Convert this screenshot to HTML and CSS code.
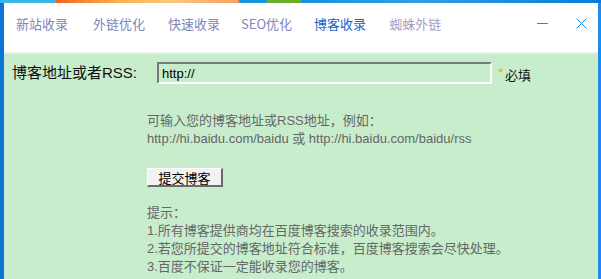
FILE: index.html
```html
<!DOCTYPE html>
<html lang="zh-CN">
<head>
<meta charset="utf-8">
<title>博客收录</title>
<link rel="stylesheet" href="styles.css">
</head>
<body>
<div class="wallpaper"></div>
<div class="frame">
  <div class="edge edge-left"></div>
  <div class="window">
    <div class="header">
      <nav class="tabs">
        <span class="tab t1">新站收录</span>
        <span class="tab t2">外链优化</span>
        <span class="tab t3">快速收录</span>
        <span class="tab t4">SEO优化</span>
        <span class="tab t5 active">博客收录</span>
        <span class="tab t6 hover">蜘蛛外链</span>
      </nav>
      <div class="controls">
        <span class="min"></span>
        <svg class="close" width="11" height="11" viewBox="0 0 11 11"><path d="M0.5 0.5 L10.5 10.5 M10.5 0.5 L0.5 10.5" stroke="#1e88e5" stroke-width="1" fill="none"/></svg>
      </div>
    </div>
    <div class="content">
      <div class="form-row">
        <div class="label-cell"><label class="label">博客地址或者RSS:</label></div>
        <input class="url" type="text" value="http://">
        <span class="star">*</span>
        <span class="req">必填</span>
      </div>
      <div class="body">
        <p class="hint">可输入您的博客地址或RSS地址，例如：<br>http://hi.baidu.com/baidu 或 http://hi.baidu.com/baidu/rss</p>
        <button class="submit" type="button">提交博客</button>
        <p class="tips">提示：<br>1.所有博客提供商均在百度博客搜索的收录范围内。<br>2.若您所提交的博客地址符合标准，百度博客搜索会尽快处理。<br>3.百度不保证一定能收录您的博客。</p>
      </div>
    </div>
  </div>
  <div class="edge edge-right"></div>
</div>
</body>
</html>
```
FILE: styles.css
```css
html, body {
  margin: 0;
  padding: 0;
  width: 601px;
  height: 279px;
  overflow: hidden;
  font-family: "Liberation Sans", "Noto Sans CJK SC", sans-serif;
}
.wallpaper {
  height: 3px;
  background: linear-gradient(90deg, #3cb4ec 0, #3cb4ec 55px, #f2641c 56px, #fbb255 120px, #fcc97a 170px, #f4a260 238px, #1a96e0 240px, #1a96e0 266px, #6ab02a 268px, #6ab02a 300px, #1a90e0 302px, #2fa0e6 420px, #0a7ad8 601px);
}
.frame {
  display: flex;
  height: 276px;
}
.edge-left { width: 4px; background: #0b76d8; }
.edge-right { width: 3px; background: #1a8cf0; }
.window {
  flex: 1;
  display: flex;
  flex-direction: column;
  background: #c7edcc;
}
.header {
  height: 49px;
  background: #fff;
  border-bottom: 2px solid #e9ecea;
  display: flex;
  justify-content: space-between;
  align-items: flex-start;
}
.tabs {
  display: flex;
  padding-left: 12px;
  padding-top: 12px;
  font-family: "Noto Sans CJK SC", sans-serif;
  font-size: 13px;
  line-height: 18px;
}
.tab { color: #7f86b9; }
.t2 { margin-left: 25px; }
.t3 { margin-left: 23px; }
.t4 { margin-left: 21px; }
.t5 { margin-left: 22px; }
.t6 { margin-left: 23px; }
.tab.active { color: #1d63bf; }
.tab.hover { color: #a99dc6; }
.controls {
  display: flex;
  align-items: flex-start;
  padding-top: 12px;
  padding-right: 11px;
}
.min {
  width: 11px;
  height: 0;
  border-top: 1.5px solid #1e88e5;
  margin-top: 8px;
  margin-right: 28px;
}
.close { margin-top: 3px; }
.content {
  flex: 1;
  padding-top: 8px;
}
.form-row {
  display: flex;
  align-items: center;
  height: 22px;
}
.label-cell {
  width: 153px;
  flex: none;
  padding-left: 8px;
  box-sizing: border-box;
  margin-top: -3px;
}
.label {
  font-size: 15px;
  color: #111;
  white-space: nowrap;
}
.url {
  width: 335px;
  height: 22px;
  flex: none;
  box-sizing: border-box;
  margin: 0;
  padding: 0 3px;
  background: #c7edcc;
  border-style: solid;
  border-width: 2px;
  border-color: #7a7a7a #ffffff #ffffff #7a7a7a;
  font-family: "Liberation Sans", sans-serif;
  font-size: 13px;
  color: #000;
  outline: none;
}
.star {
  color: #f5a623;
  font-size: 13px;
  margin-left: 6px;
  margin-top: -2px;
}
.req {
  font-size: 13px;
  color: #111;
  margin-left: 2px;
  margin-top: 2px;
}
.body {
  padding-left: 143px;
}
.hint {
  margin: 28px 0 0 0;
  font-size: 13px;
  line-height: 18px;
  color: #666;
}
.submit {
  display: block;
  margin-top: 20px;
  width: 76px;
  height: 19px;
  padding: 0;
  background: #f2f2f2;
  border-style: solid;
  border-width: 1px 2px 2px 1px;
  border-color: #ffffff #6a6a6a #6a6a6a #ffffff;
  font-family: "Noto Sans CJK SC", sans-serif;
  font-size: 13px;
  line-height: 15px;
  color: #000;
}
.tips {
  margin: 17px 0 0 0;
  font-size: 13px;
  line-height: 18px;
  color: #666;
}
```
